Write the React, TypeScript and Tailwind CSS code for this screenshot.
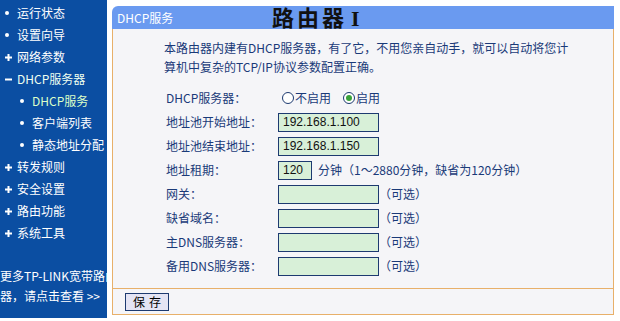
import React from "react";

const font = { fontFamily: '"Noto Sans CJK SC", "Liberation Sans", sans-serif' };

type NavItem = { label: string; mark: "dot" | "plus" | "minus"; sub?: boolean; active?: boolean };

const nav: NavItem[] = [
  { label: "运行状态", mark: "dot" },
  { label: "设置向导", mark: "dot" },
  { label: "网络参数", mark: "plus" },
  { label: "DHCP服务器", mark: "minus" },
  { label: "DHCP服务", mark: "dot", sub: true, active: true },
  { label: "客户端列表", mark: "dot", sub: true },
  { label: "静态地址分配", mark: "dot", sub: true },
  { label: "转发规则", mark: "plus" },
  { label: "安全设置", mark: "plus" },
  { label: "路由功能", mark: "plus" },
  { label: "系统工具", mark: "plus" },
];

const Mark: React.FC<{ mark: NavItem["mark"] }> = ({ mark }) => {
  if (mark === "dot") return <span className="w-[4px] h-[4px] rounded-full bg-white" />;
  if (mark === "plus")
    return (
      <svg width="7" height="7" viewBox="0 0 7 7">
        <path d="M0 3.5h7M3.5 0v7" stroke="#fff" strokeWidth="2" />
      </svg>
    );
  return (
    <svg width="7" height="7" viewBox="0 0 7 7">
      <path d="M0 3.5h7" stroke="#fff" strokeWidth="2" />
    </svg>
  );
};

const Sidebar: React.FC = () => (
  <div className="w-[107px] h-[318px] bg-[#0b4ea2] overflow-hidden pt-[2px] shrink-0">
    {nav.map((n) => (
      <div key={n.label} className={`h-[22px] flex items-center whitespace-nowrap ${n.sub ? "pl-[20px]" : "pl-[5px]"}`}>
        <span className="w-[12px] flex items-center">
          <Mark mark={n.mark} />
        </span>
        <span className={`text-[12px] ${n.active ? "text-[#dcffc8]" : n.label === "DHCP服务器" ? "text-[#eefff0]" : "text-white"}`}>
          {n.label}
        </span>
      </div>
    ))}
    {/* clipped at the sidebar edge, same as the original page */}
    <div className="mt-[22px] w-[130px] text-white text-[12px] leading-[20px]">
      更多TP-LINK宽带路由器，请点击查看 &gt;&gt;
    </div>
  </div>
);

const Field: React.FC<{ value?: string; w?: string }> = ({ value = "", w = "w-[101px]" }) => (
  <div
    className={`${w} h-[19px] border border-[#1d3a70] bg-[#d8f0d8] flex items-center pl-[4px] text-[12px] text-[#111]`}
    style={{ fontFamily: '"Liberation Sans", sans-serif' }}
  >
    {value}
  </div>
);

const Radio: React.FC<{ checked?: boolean; label: string }> = ({ checked, label }) => (
  <span className="flex items-center">
    <span className="w-[12px] h-[12px] rounded-full border border-[#1d3a70] bg-white flex items-center justify-center mr-[1px]">
      {checked && <span className="w-[6px] h-[6px] rounded-full bg-[#3aa23a]" />}
    </span>
    {label}
  </span>
);

const Row: React.FC<{ label: string; children: React.ReactNode }> = ({ label, children }) => (
  <div className="h-[24px] flex items-center">
    <div className="w-[112px] shrink-0">{label}</div>
    <div className="flex items-center">{children}</div>
  </div>
);

export default function App() {
  return (
    <div className="w-[620px] h-[321px] bg-white flex text-[12px] overflow-hidden" style={font}>
      <Sidebar />
      <div className="ml-[5px] mt-[6px] w-[502px] h-[309px] flex flex-col">
        <div className="h-[23px] bg-[#6a9af0] rounded-tl-[6px] flex items-center">
          <div className="w-[160px] pl-[5px] text-white text-[12px]">DHCP服务</div>
          <div className="text-[22px] font-bold text-[#111] leading-none tracking-[3px] flex items-baseline">
            路由器
            <span className="ml-[4px]" style={{ fontFamily: '"Liberation Serif", serif' }}>
              I
            </span>
          </div>
        </div>
        <div className="flex-1 bg-[#f5f5f8] border-x border-b border-[#e8b06a] pl-[51px] text-[#1a3a78]">
          <p className="mt-[9px] leading-[19px]">
            本路由器内建有DHCP服务器，有了它，不用您亲自动手，就可以自动将您计
            <br />
            算机中复杂的TCP/IP协议参数配置正确。
          </p>
          <div className="mt-[10px] pl-[2px]">
            <Row label="DHCP服务器：">
              <div className="flex items-center gap-[12px] pl-[4px]">
                <Radio label="不启用" />
                <Radio checked label="启用" />
              </div>
            </Row>
            <Row label="地址池开始地址：">
              <Field value="192.168.1.100" />
            </Row>
            <Row label="地址池结束地址：">
              <Field value="192.168.1.150" />
            </Row>
            <Row label="地址租期：">
              <Field value="120" w="w-[34px]" />
              <span className="ml-[6px]">分钟（1～2880分钟，缺省为120分钟）</span>
            </Row>
            <Row label="网关：">
              <Field />
              <span>（可选）</span>
            </Row>
            <Row label="缺省域名：">
              <Field />
              <span>（可选）</span>
            </Row>
            <Row label="主DNS服务器：">
              <Field />
              <span>（可选）</span>
            </Row>
            <Row label="备用DNS服务器：">
              <Field />
              <span>（可选）</span>
            </Row>
          </div>
        </div>
        <div className="h-[26px] bg-[#f5f5f8] border-x border-b border-[#e8b06a] flex items-center pl-[12px]">
          <button className="h-[18px] w-[44px] bg-[#e4e4f4] border border-[#1d3a70] text-[12px] text-black leading-none tracking-[4px] pl-[4px]">
            保存
          </button>
        </div>
      </div>
    </div>
  );
}
